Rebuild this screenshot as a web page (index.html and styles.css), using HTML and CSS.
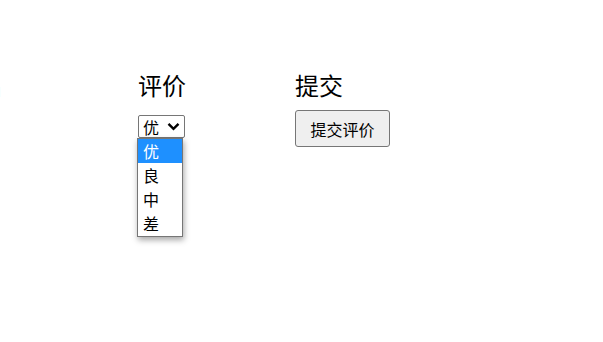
FILE: index.html
```html
<!DOCTYPE html>
<html lang="zh">
<head>
<meta charset="utf-8">
<title>评价</title>
<link rel="stylesheet" href="styles.css">
</head>
<body>
<div class="row">
  <div class="col col-first">
    <h2 class="title">姓名</h2>
  </div>
  <div class="col">
    <h2 class="title">评价</h2>
    <div class="select-wrap">
      <div class="select">
        <span class="select-value">优</span>
        <svg class="chev" width="13" height="9" viewBox="0 0 13 9"><path d="M1.5 1.8 L6.5 6.8 L11.5 1.8" fill="none" stroke="#000" stroke-width="2.4"/></svg>
      </div>
      <ul class="options">
        <li class="opt active">优</li>
        <li class="opt">良</li>
        <li class="opt">中</li>
        <li class="opt">差</li>
      </ul>
    </div>
  </div>
  <div class="col">
    <h2 class="title">提交</h2>
    <button class="btn">提交评价</button>
  </div>
</div>
</body>
</html>
```

FILE: styles.css
```css
html, body {
  margin: 0;
  padding: 0;
  background: #fff;
  overflow: hidden;
}
body {
  font-family: "Noto Sans CJK SC", "Noto Sans", sans-serif;
  color: #000;
  width: 603px;
  height: 342px;
}
.row {
  display: flex;
  align-items: flex-start;
  padding-top: 69px;
  margin-left: -45px;
}
.col {
  width: 157px;
  display: flex;
  flex-direction: column;
  align-items: flex-start;
}
.col-first {
  width: 183px;
}
.title {
  margin: 0;
  font-size: 24px;
  font-weight: normal;
  line-height: 32px;
}
.select-wrap {
  position: relative;
  margin-top: 14px;
}
.select {
  box-sizing: border-box;
  width: 47px;
  height: 23px;
  border: 1px solid #767676;
  border-radius: 2px;
  background: #fff;
  display: flex;
  align-items: center;
  padding-left: 4px;
  font-size: 16px;
  line-height: 20px;
}
.select-value {
  width: 24px;
}
.chev {
  display: block;
}
.options {
  position: absolute;
  top: 23px;
  left: -1px;
  box-sizing: border-box;
  width: 46px;
  height: 99px;
  margin: 0;
  padding: 0;
  list-style: none;
  border: 1px solid #767676;
  background: #fff;
  box-shadow: 1px 3px 6px rgba(0, 0, 0, 0.35);
}
.opt {
  height: 24px;
  line-height: 24px;
  padding-left: 5px;
  font-size: 16px;
}
.opt.active {
  background: #1e90ff;
  color: #fff;
}
.btn {
  margin-top: 9px;
  box-sizing: border-box;
  width: 95px;
  height: 37px;
  padding: 0;
  border: 1px solid #767676;
  border-radius: 3px;
  background: #efefef;
  font-family: "Noto Sans CJK SC", "Noto Sans", sans-serif;
  font-size: 16px;
  color: #000;
}
```
